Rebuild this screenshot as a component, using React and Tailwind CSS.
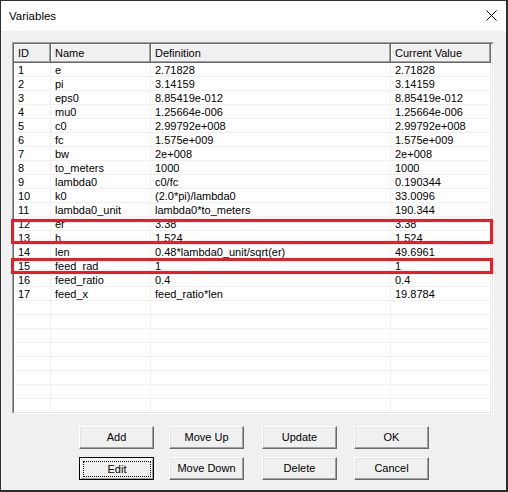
import React from "react";

const VARS = [
  ["1", "e", "2.71828", "2.71828"],
  ["2", "pi", "3.14159", "3.14159"],
  ["3", "eps0", "8.85419e-012", "8.85419e-012"],
  ["4", "mu0", "1.25664e-006", "1.25664e-006"],
  ["5", "c0", "2.99792e+008", "2.99792e+008"],
  ["6", "fc", "1.575e+009", "1.575e+009"],
  ["7", "bw", "2e+008", "2e+008"],
  ["8", "to_meters", "1000", "1000"],
  ["9", "lambda0", "c0/fc", "0.190344"],
  ["10", "k0", "(2.0*pi)/lambda0", "33.0096"],
  ["11", "lambda0_unit", "lambda0*to_meters", "190.344"],
  ["12", "er", "3.38", "3.38"],
  ["13", "h", "1.524", "1.524"],
  ["14", "len", "0.48*lambda0_unit/sqrt(er)", "49.6961"],
  ["15", "feed_rad", "1", "1"],
  ["16", "feed_ratio", "0.4", "0.4"],
  ["17", "feed_x", "feed_ratio*len", "19.8784"],
];

const ROWS = [...VARS, ...Array.from({ length: 8 }, () => ["", "", "", ""])];

const COLS = [
  { label: "ID", w: "w-[37px]" },
  { label: "Name", w: "w-[100px]" },
  { label: "Definition", w: "w-[240px]" },
  { label: "Current Value", w: "w-[100px]" },
];

function Button({ label, isDefault, className = "" }) {
  if (isDefault) {
    return (
      <div className={`w-[75px] h-[23px] border border-black ${className}`}>
        <div className="w-full h-full bg-[#f0f0f0] border-t border-l border-white border-r-[#696969] border-b-[#696969] shadow-[inset_-1px_-1px_0_#a0a0a0] flex items-center justify-center p-[2px]">
          <div className="w-full h-full border border-dotted border-black flex items-center justify-center">
            {label}
          </div>
        </div>
      </div>
    );
  }
  return (
    <div
      className={`w-[75px] h-[23px] bg-[#f0f0f0] border border-t-white border-l-white border-r-[#696969] border-b-[#696969] shadow-[inset_-1px_-1px_0_#a0a0a0,inset_1px_1px_0_#e3e3e3] flex items-center justify-center ${className}`}
    >
      {label}
    </div>
  );
}

export default function App() {
  return (
    <div className="relative w-[508px] h-[492px] overflow-hidden border-l border-t border-r-2 border-b-2 border-[#2e2e2e] bg-[#f0f0f0] text-black text-[11px] font-['Liberation_Sans',Arial,sans-serif]">
      <div className="h-[30px] bg-white flex items-center justify-between pl-[8px] pr-[9px]">
        <span className="text-[11.5px] pt-[1px]">Variables</span>
        <svg width="11" height="11" viewBox="0 0 11 11" className="mb-[1px]">
          <path d="M0.5 0.5 L10.5 10.5 M10.5 0.5 L0.5 10.5" stroke="#000" strokeWidth="1" fill="none" />
        </svg>
      </div>

      <div className="pl-[11px]">
        <div className="mt-[11px] w-[482px] h-[372px] border border-t-[#a0a0a0] border-l-[#a0a0a0] border-r-white border-b-white">
          <div className="w-full h-full border border-t-[#696969] border-l-[#696969] border-r-[#e3e3e3] border-b-[#e3e3e3] bg-white overflow-hidden">
            <div className="flex h-[19px] bg-[#f0f0f0]">
              {COLS.map((c) => (
                <div
                  key={c.label}
                  className={`${c.w} shrink-0 h-full pl-[4px] pt-[2px] leading-[14px] border-r border-b border-[#696969] shadow-[inset_-1px_-1px_0_#a0a0a0,inset_1px_1px_0_#ffffff]`}
                >
                  {c.label}
                </div>
              ))}
              <div className="flex-1 bg-white" />
            </div>
            {ROWS.map((r, i) => (
              <div key={i} className="flex h-[14px]">
                {r.map((v, j) => (
                  <div
                    key={j}
                    className={`${COLS[j].w} shrink-0 h-full pl-[4px] pt-[1px] leading-[12px] border-r border-b border-[#f0f0f0] whitespace-nowrap overflow-hidden`}
                  >
                    {v}
                  </div>
                ))}
              </div>
            ))}
          </div>
        </div>
      </div>

      <div className="pl-[78px] mt-[12px] flex flex-col gap-[8px]">
        <div className="flex">
          <Button label="Add" />
          <Button label="Move Up" className="ml-[15px]" />
          <Button label="Update" className="ml-[18px]" />
          <Button label="OK" className="ml-[17px]" />
        </div>
        <div className="flex">
          <Button label="Edit" isDefault />
          <Button label="Move Down" className="ml-[15px]" />
          <Button label="Delete" className="ml-[18px]" />
          <Button label="Cancel" className="ml-[17px]" />
        </div>
      </div>

      <div className="absolute left-[10px] top-[218px] w-[482px] h-[25px] border-[3px] border-[#ed1c24]" />
      <div className="absolute left-[10px] top-[257px] w-[482px] h-[16px] border-[3px] border-[#ed1c24]" />
    </div>
  );
}
